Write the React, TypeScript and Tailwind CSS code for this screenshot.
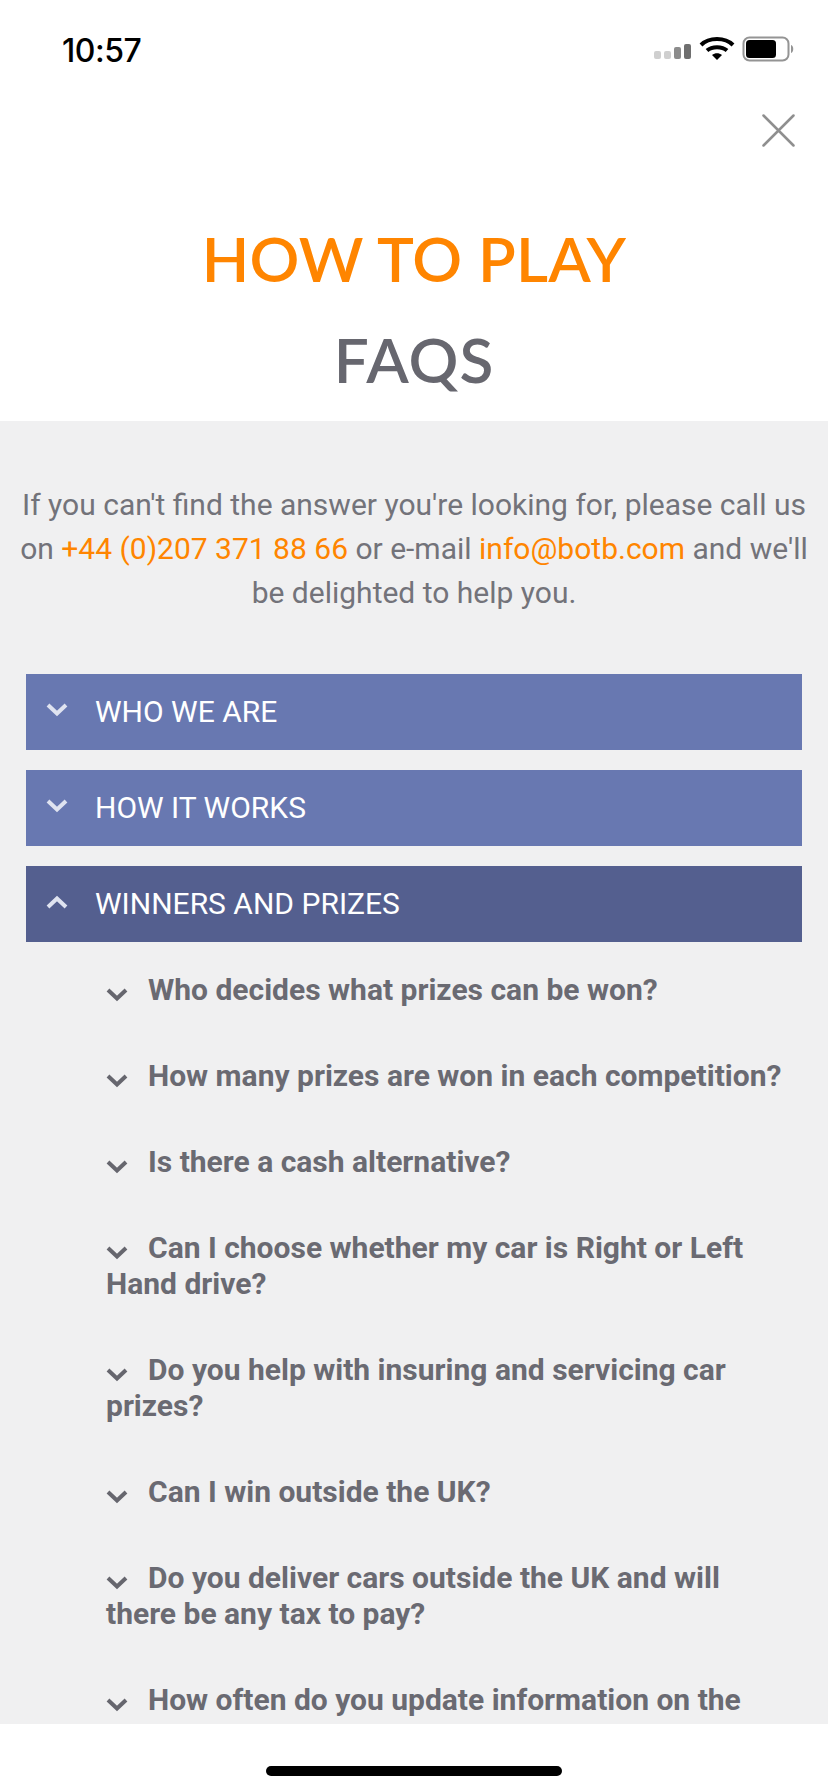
const questions = [
  'Who decides what prizes can be won?',
  'How many prizes are won in each competition?',
  'Is there a cash alternative?',
  'Can I choose whether my car is Right or Left Hand drive?',
  'Do you help with insuring and servicing car prizes?',
  'Can I win outside the UK?',
  'Do you deliver cars outside the UK and will there be any tax to pay?',
  'How often do you update information on the website?',
]

function StatusBar() {
  return (
    <div className="h-[84px] flex items-start justify-between pl-[62px] pr-[28px] pt-[32px]">
      <span className="text-[32px] leading-[38px] font-medium text-black font-['Inter',sans-serif] tracking-[-0.5px]">10:57</span>
      <svg width="146" height="28" viewBox="0 0 146 28" className="mt-[4px]">
        <rect x="0" y="15" width="7" height="8" rx="2" fill="#cfcfcf" />
        <rect x="10" y="15" width="7" height="8" rx="2" fill="#cfcfcf" />
        <rect x="20" y="11" width="7" height="12" rx="2" fill="#8c8c8c" />
        <rect x="30" y="8" width="7" height="15" rx="2" fill="#6f6f6f" />
        <path d="M47 9 C55 1 71 1 79 9" fill="none" stroke="#000" strokeWidth="4" />
        <path d="M53 14.500 C58 10 68 10 73 14.500" fill="none" stroke="#000" strokeWidth="4" />
        <path d="M58 19 L63 24 L68 19 C65 16.500 61 16.500 58 19 Z" fill="#000" />
        <rect x="89.500" y="1.500" width="45" height="23" rx="6" fill="none" stroke="#949494" strokeWidth="2" />
        <rect x="92" y="4" width="30" height="18" rx="3.500" fill="#000" />
        <path d="M137 9 C140 10 140 16 137 17 Z" fill="#949494" />
      </svg>
    </div>
  )
}

function CloseIcon() {
  return (
    <svg width="33" height="33" viewBox="0 0 33 33" className="stroke-[#8f8f8f]">
      <path d="M1.500 1.500 L31.500 31.500 M31.500 1.500 L1.500 31.500" strokeWidth="2.500" strokeLinecap="round" fill="none" />
    </svg>
  )
}

function Chevron({ up, className }: { up?: boolean; className?: string }) {
  return (
    <svg width="22" height="14" viewBox="0 0 22 14" className={className}>
      <path d={up ? 'M2 12 L11 3.500 L20 12' : 'M2 2 L11 10.500 L20 2'} fill="none" stroke="currentColor" strokeWidth="4" />
    </svg>
  )
}

function SectionBar({ label, open }: { label: string; open?: boolean }) {
  return (
    <div className={`h-[76px] flex items-center pl-[20px] ${open ? 'bg-[#545f8f]' : 'bg-[#6878b1]'}`}>
      <Chevron up={open} className="text-[#dfe3f0] shrink-0 mb-[4px]" />
      <span className="ml-[28px] text-[30px] leading-[36px] text-white -translate-x-px">{label}</span>
    </div>
  )
}

function Question({ text }: { text: string }) {
  return (
    <p className="text-[30px] leading-[36px] font-bold text-[#6a6a72] mb-[50px]">
      <Chevron className="inline-block text-[#66666e] mr-[20px] align-[-2px]" />
      {text}
    </p>
  )
}

export default function App() {
  return (
    <div className="w-[828px] h-[1792px] flex flex-col bg-white overflow-hidden font-['Roboto',sans-serif]">
      <StatusBar />
      <div className="h-[337px] flex flex-col items-center relative">
        <div className="absolute right-[33px] top-[30px]">
          <CloseIcon />
        </div>
        <h1 className="mt-[138px] text-[62px] leading-[72px] text-[#ff8500] font-['Lato',sans-serif] font-semibold tracking-[0.2px]">HOW TO PLAY</h1>
        <h2 className="mt-[29px] text-[62px] leading-[72px] text-[#67676f] font-['Lato',sans-serif] font-semibold tracking-[1px]">FAQS</h2>
      </div>
      <div className="flex-1 min-h-0 overflow-hidden bg-[#f0f0f1] px-[20px]">
        <p className="mt-[62px] text-center text-[30px] leading-[44px] text-[#73737a]">
          If you can't find the answer you're looking for, please call us on{' '}
          <span className="text-[#ff8500]">+44 (0)207 371 88 66</span> or e-mail{' '}
          <span className="text-[#ff8500]">info@botb.com</span> and we'll be delighted to help you.
        </p>
        <div className="mt-[59px] mx-[6px] flex flex-col gap-[20px]">
          <SectionBar label="WHO WE ARE" />
          <SectionBar label="HOW IT WORKS" />
          <SectionBar label="WINNERS AND PRIZES" open />
        </div>
        <div className="mt-[30px] pl-[86px] pr-[20px]">
          {questions.map(q => (
            <Question key={q} text={q} />
          ))}
        </div>
      </div>
      <div className="h-[68px] flex justify-center pt-[42px]">
        <div className="w-[296px] h-[10px] rounded-full bg-black" />
      </div>
    </div>
  )
}
